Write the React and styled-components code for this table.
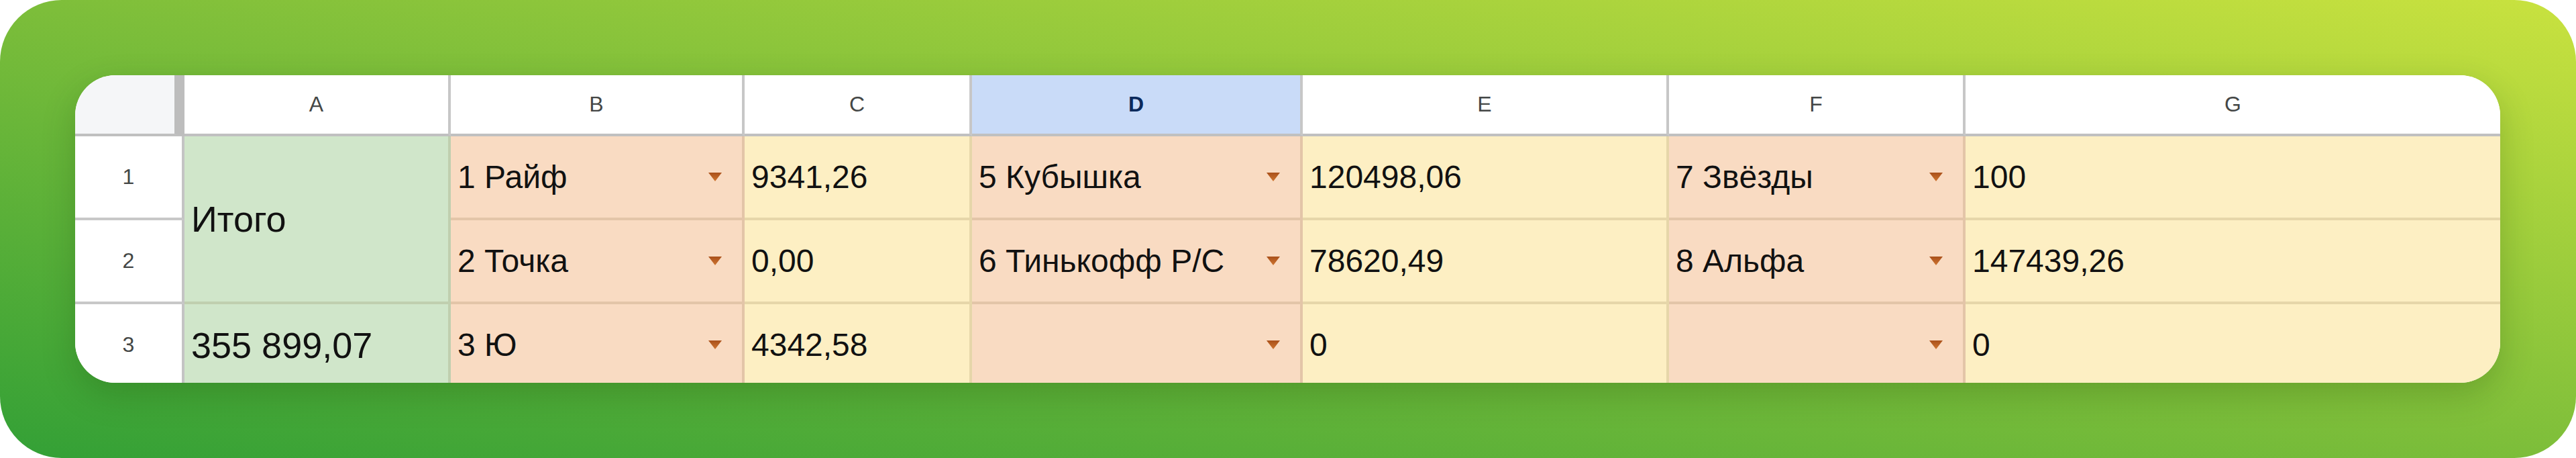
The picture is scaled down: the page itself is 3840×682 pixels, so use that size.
import React from 'react';
import styled, {createGlobalStyle} from 'styled-components';

const GlobalStyle = createGlobalStyle`
  html, body {
    margin: 0;
    padding: 0;
    background: #ffffff;
  }
`;

const tones = {
  green: '#d0e6ca',
  peach: '#f9dbc2',
  yellow: '#fdefc3',
};

const Frame = styled.div`
  box-sizing: border-box;
  width: 3840px;
  height: 682px;
  padding: 112px 113px 112px 112px;
  border-radius: 92px;
  background: linear-gradient(to top right, #33a036 0%, #7dbe3a 50%, #c9e23f 100%);
  font-family: 'Liberation Sans', Arial, sans-serif;
`;

const Sheet = styled.div`
  display: grid;
  grid-template-columns: 163px 397px 438px 339px 493px 546px 442px 797px;
  grid-template-rows: 91px 125px 125px 121px;
  height: 458px;
  overflow: hidden;
  border-radius: 60px;
  background: #ffffff;
  box-shadow: 0 18px 50px rgba(20, 60, 0, 0.22);
`;

const Corner = styled.div`
  box-sizing: border-box;
  background: #f5f6f8;
  border-right: 15px solid #bdbdbd;
  border-bottom: 4px solid #c0c0c0;
`;

const ColHead = styled.div`
  box-sizing: border-box;
  display: flex;
  align-items: center;
  justify-content: center;
  background: ${(p) => (p.$active ? '#c9dbf8' : '#ffffff')};
  color: ${(p) => (p.$active ? '#0b2a5c' : '#444746')};
  font-weight: ${(p) => (p.$active ? 700 : 400)};
  font-size: 32px;
  border-right: ${(p) => (p.$last ? 'none' : '4px solid #c7c7c7')};
  border-bottom: 4px solid #c0c0c0;
`;

const RowHead = styled.div`
  box-sizing: border-box;
  display: flex;
  align-items: center;
  justify-content: center;
  background: #ffffff;
  color: #444746;
  font-size: 32px;
  border-right: 4px solid #c4c4c4;
  border-bottom: ${(p) => (p.$last ? 'none' : '4px solid #c8c8c8')};
`;

const Cell = styled.div`
  box-sizing: border-box;
  display: flex;
  align-items: center;
  justify-content: space-between;
  padding: 0 30px 0 10px;
  min-width: 0;
  white-space: nowrap;
  background: ${(p) => tones[p.$tone]};
  color: #111111;
  font-size: ${(p) => (p.$big ? '54px' : '48px')};
  grid-row: ${(p) => (p.$span ? `span ${p.$span}` : 'auto')};
  border-right: ${(p) => (p.$last ? 'none' : '4px solid rgba(110, 85, 40, 0.16)')};
  border-bottom: ${(p) => (p.$bottom ? 'none' : '4px solid rgba(110, 85, 40, 0.16)')};
`;

const Arrow = () => (
  <svg width="20" height="13" viewBox="0 0 20 13">
    <defs>
      <linearGradient id="chipArrow" x1="0" y1="0" x2="0" y2="1">
        <stop offset="0" stopColor="#a9501a" />
        <stop offset="1" stopColor="#cf7530" />
      </linearGradient>
    </defs>
    <path d="M0 0 H20 L10 13 Z" fill="url(#chipArrow)" />
  </svg>
);

const Chip = ({children, bottom}) => (
  <Cell $tone="peach" $bottom={bottom}>
    <span>{children}</span>
    <Arrow />
  </Cell>
);

const columns = ['A', 'B', 'C', 'D', 'E', 'F', 'G'];

export default function App() {
  return (
    <>
      <GlobalStyle />
      <Frame>
        <Sheet>
          <Corner />
          {columns.map((c) => (
            <ColHead key={c} $active={c === 'D'} $last={c === 'G'}>
              {c}
            </ColHead>
          ))}

          <RowHead>1</RowHead>
          <Cell $tone="green" $big $span={2}>Итого</Cell>
          <Chip>1 Райф</Chip>
          <Cell $tone="yellow">9341,26</Cell>
          <Chip>5 Кубышка</Chip>
          <Cell $tone="yellow">120498,06</Cell>
          <Chip>7 Звёзды</Chip>
          <Cell $tone="yellow" $last>100</Cell>

          <RowHead>2</RowHead>
          <Chip>2 Точка</Chip>
          <Cell $tone="yellow">0,00</Cell>
          <Chip>6 Тинькофф Р/С</Chip>
          <Cell $tone="yellow">78620,49</Cell>
          <Chip>8 Альфа</Chip>
          <Cell $tone="yellow" $last>147439,26</Cell>

          <RowHead $last>3</RowHead>
          <Cell $tone="green" $big $bottom>355 899,07</Cell>
          <Chip bottom>3 Ю</Chip>
          <Cell $tone="yellow" $bottom>4342,58</Cell>
          <Chip bottom />
          <Cell $tone="yellow" $bottom>0</Cell>
          <Chip bottom />
          <Cell $tone="yellow" $bottom $last>0</Cell>
        </Sheet>
      </Frame>
    </>
  );
}
